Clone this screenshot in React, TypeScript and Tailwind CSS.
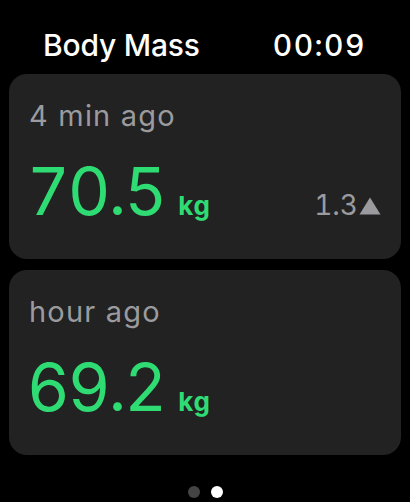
export default function App() {
  return (
    <div className="w-[410px] h-[502px] bg-black overflow-hidden flex flex-col" style={{ fontFamily: "Inter, 'Noto Sans', sans-serif" }}>
      <div className="flex justify-between items-center h-[74px] pl-[43px] pr-[44px] pt-[16px] text-white text-[30px] font-medium">
        <span className="tracking-[-0.2px]">Body Mass</span>
        <span className="tracking-[1.5px] tabular-nums">00:09</span>
      </div>
      <div className="flex flex-col gap-[11px] px-[9px]">
        <div className="h-[185px] rounded-[18px] bg-[#222222] pl-[20px] pr-[20px] pt-[26px]">
          <div className="text-[#9b9b9f] text-[29px] leading-[32px] tracking-[1.2px]">4 min ago</div>
          <div className="flex items-baseline justify-between mt-[27px]">
            <div className="flex items-baseline gap-[13px] text-[#2fdc74]">
              <span className="text-[66px] leading-[64px] tabular-nums tracking-[-2px] -ml-[2px]">70.5</span>
              <span className="text-[26px] font-bold tracking-[1px]">kg</span>
            </div>
            <div className="flex items-baseline text-[#9b9b9f] text-[28px]">
              <span className="tabular-nums">1.3</span>
              <svg width="22" height="18" viewBox="0 0 22 18" className="ml-[1px]"><path d="M11 0.5 L21.5 17.5 L0.5 17.5 Z" fill="#9b9b9f" /></svg>
            </div>
          </div>
        </div>
        <div className="h-[185px] rounded-[18px] bg-[#222222] pl-[20px] pr-[20px] pt-[26px]">
          <div className="text-[#9b9b9f] text-[29px] leading-[32px] tracking-[1.2px]">hour ago</div>
          <div className="flex items-baseline mt-[27px]">
            <div className="flex items-baseline gap-[13px] text-[#2fdc74]">
              <span className="text-[66px] leading-[64px] tabular-nums tracking-[-2px] -ml-[2px]">69.2</span>
              <span className="text-[26px] font-bold tracking-[1px]">kg</span>
            </div>
          </div>
        </div>
      </div>
      <div className="flex justify-center gap-[11px] mt-[31px]">
        <div className="w-[12px] h-[12px] rounded-full bg-[#444444]" />
        <div className="w-[12px] h-[12px] rounded-full bg-white" />
      </div>
    </div>
  );
}
